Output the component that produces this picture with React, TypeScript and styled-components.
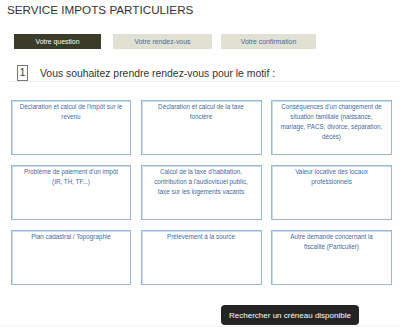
import React from "react";
import styled, { createGlobalStyle } from "styled-components";

const Global = createGlobalStyle`
  html, body {
    margin: 0;
    padding: 0;
    background: #fff;
  }
  body {
    font-family: "Liberation Sans", Arial, sans-serif;
    width: 400px;
    height: 327px;
    overflow: hidden;
  }
`;

const Page = styled.div`
  width: 400px;
  height: 327px;
  display: flex;
  flex-direction: column;
`;

const Title = styled.h1`
  margin: 3px 0 0 7px;
  font-size: 11.7px;
  line-height: 14px;
  font-weight: normal;
  color: #333;
`;

const Tabs = styled.div`
  display: flex;
  margin: 17px 0 0 14px;
`;

const Tab = styled.div<{ $w: number; $gap: number; $active?: boolean }>`
  width: ${(p) => p.$w}px;
  margin-right: ${(p) => p.$gap}px;
  height: 15px;
  display: flex;
  align-items: center;
  justify-content: center;
  font-size: 6.9px;
  background: ${(p) => (p.$active ? "#3b3b29" : "#e0e0d3")};
  color: ${(p) => (p.$active ? "#fff" : "#4b6a95")};
`;

const Step = styled.div`
  display: flex;
  align-items: center;
  margin: 16px 0 0 10px;
  width: 390px;
  height: 16px;
  border-bottom: 1px solid #eeeeee;
`;

const StepNum = styled.div`
  margin-left: 7px;
  width: 9px;
  height: 14px;
  border: 1px solid #777;
  display: flex;
  align-items: center;
  justify-content: center;
  font-size: 10px;
  color: #333;
  margin-top: -1px;
`;

const StepText = styled.div`
  margin-left: 12px;
  font-size: 10.4px;
  color: #333;
`;

const Grid = styled.div`
  display: grid;
  grid-template-columns: 120px 121px 121px;
  grid-auto-rows: 55px;
  column-gap: 9.5px;
  row-gap: 10px;
  margin: 18px 0 0 11px;
`;

const Card = styled.div`
  box-sizing: border-box;
  border: 1px solid #9ab8d6;
  box-shadow: inset 1px 1px 0 #c9dbee;
  padding: 1px 7px 0;
  text-align: center;
  font-size: 6.3px;
  line-height: 10px;
  color: #4669a0;
`;

const Actions = styled.div`
  display: flex;
  justify-content: flex-end;
  padding-right: 41px;
  margin-top: 20px;
`;

const Search = styled.button`
  width: 138px;
  height: 20px;
  border: none;
  border-radius: 4px;
  background: #242424;
  color: #fff;
  font-family: "Liberation Sans", Arial, sans-serif;
  font-size: 8px;
  padding: 0;
`;

const Footer = styled.div`
  flex: 1;
  margin-top: 1px;
  background: #f3f3f3;
`;

const motifs = [
  "Déclaration et calcul de l'impôt sur le revenu",
  "Déclaration et calcul de la taxe foncière",
  "Conséquences d'un changement de situation familiale (naissance, mariage, PACS, divorce, séparation, décès)",
  "Problème de paiement d'un impôt (IR, TH, TF...)",
  "Calcul de la taxe d'habitation, contribution à l'audiovisuel public, taxe sur les logements vacants",
  "Valeur locative des locaux professionnels",
  "Plan cadastral / Topographie",
  "Prélèvement à la source",
  "Autre demande concernant la fiscalité (Particulier)",
];

export default function App() {
  return (
    <Page>
      <Global />
      <Title>SERVICE IMPOTS PARTICULIERS</Title>
      <Tabs>
        <Tab $w={87} $gap={12} $active>
          Votre question
        </Tab>
        <Tab $w={99} $gap={9}>
          Votre rendez-vous
        </Tab>
        <Tab $w={95} $gap={0}>
          Votre confirmation
        </Tab>
      </Tabs>
      <Step>
        <StepNum>1</StepNum>
        <StepText>Vous souhaitez prendre rendez-vous pour le motif :</StepText>
      </Step>
      <Grid>
        {motifs.map((m) => (
          <Card key={m}>{m}</Card>
        ))}
      </Grid>
      <Actions>
        <Search>Rechercher un créneau disponible</Search>
      </Actions>
      <Footer />
    </Page>
  );
}
